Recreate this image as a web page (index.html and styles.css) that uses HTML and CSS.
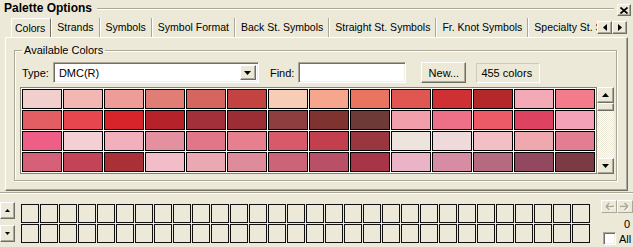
FILE: index.html
```html
<!DOCTYPE html>
<html lang="en">
<head>
  <meta charset="UTF-8" />
  <title>Palette Options</title>
  <link rel="stylesheet" href="styles.css">
</head>
<body>
  <div class="pane">
    <div class="pane-title">
      <span class="pane-caption">Palette Options</span>
      <span class="pane-rule"></span>
      <span class="close-btn raised">
        <svg width="8" height="7" viewBox="0 0 8 7"><path d="M0.5 0.5 L7.5 6.5 M7.5 0.5 L0.5 6.5" stroke="#000" stroke-width="1.7" fill="none"/></svg>
      </span>
    </div>

    <div class="tab-strip">
      <div class="tabs">
        <span class="tab active">Colors</span>
        <span class="tab">Strands</span>
        <span class="tab">Symbols</span>
        <span class="tab">Symbol Format</span>
        <span class="tab">Back St. Symbols</span>
        <span class="tab">Straight St. Symbols</span>
        <span class="tab">Fr. Knot Symbols</span>
        <span class="tab">Specialty St. Symbols</span>
      </div>
      <div class="tab-arrows">
        <span class="mini-btn raised"><svg width="4" height="7" viewBox="0 0 4 7"><polygon points="4,0 0,3.5 4,7" fill="#000"/></svg></span>
        <span class="mini-btn raised"><svg width="4" height="7" viewBox="0 0 4 7"><polygon points="0,0 4,3.5 0,7" fill="#000"/></svg></span>
      </div>
    </div>

    <div class="tab-page">
      <fieldset class="group">
        <legend>Available Colors</legend>
        <div class="filter-row">
          <span class="lbl-type">Type:</span>
          <div class="combo sunken">
            <span class="combo-text">DMC(R)</span>
            <span class="combo-btn raised"><svg width="7" height="4" viewBox="0 0 7 4"><polygon points="0,0 7,0 3.5,4" fill="#000"/></svg></span>
          </div>
          <span class="lbl-find">Find:</span>
          <div class="find-field sunken"></div>
          <span class="push-btn raised">New...</span>
          <span class="count">455 colors</span>
        </div>
        <div class="palette">
          <div class="swatches" id="swatches"></div>
          <div class="vscroll">
            <span class="sb-btn raised"><svg width="7" height="4" viewBox="0 0 7 4"><polygon points="0,4 3.5,0 7,4" fill="#000"/></svg></span>
            <span class="sb-thumb raised"></span>
            <span class="sb-track"></span>
            <span class="sb-btn raised"><svg width="7" height="4" viewBox="0 0 7 4"><polygon points="0,0 7,0 3.5,4" fill="#000"/></svg></span>
          </div>
        </div>
      </fieldset>
    </div>

    <div class="tray">
      <div class="tray-nav">
        <span class="nav-btn raised"><svg width="5" height="3" viewBox="0 0 5 3"><polygon points="0,3 2.5,0 5,3" fill="#000"/></svg></span>
        <span class="nav-btn raised"><svg width="5" height="3" viewBox="0 0 5 3"><polygon points="0,0 5,0 2.5,3" fill="#000"/></svg></span>
      </div>
      <div class="slots" id="slots"></div>
      <div class="tray-side">
        <div class="hist-arrows">
          <span class="hist-btn">
            <svg width="11" height="9" viewBox="0 0 11 9"><path d="M2 4.5 H10 M2 4.5 L5.5 1 M2 4.5 L5.5 8" stroke="#fff" stroke-width="1.4" fill="none" transform="translate(1 1)"/><path d="M2 4.5 H10 M2 4.5 L5.5 1 M2 4.5 L5.5 8" stroke="#aca899" stroke-width="1.4" fill="none"/></svg>
          </span>
          <span class="hist-btn">
            <svg width="11" height="9" viewBox="0 0 11 9"><path d="M0 4.5 H8 M8 4.5 L4.5 1 M8 4.5 L4.5 8" stroke="#fff" stroke-width="1.4" fill="none" transform="translate(1 1)"/><path d="M0 4.5 H8 M8 4.5 L4.5 1 M8 4.5 L4.5 8" stroke="#aca899" stroke-width="1.4" fill="none"/></svg>
          </span>
        </div>
        <div class="hist-count">0</div>
        <label class="check-row"><span class="check-box"></span>All</label>
      </div>
    </div>
  </div>

  <script>
    const colors = [
      '#f1cfcd', '#f2b6b3', '#ee9c97', '#e07e76', '#d4655f', '#c2433f', '#f7cdb6', '#f5a68c', '#e9745f', '#e05650', '#ce3034', '#b4282a', '#f4a9b6', '#f27c8a',
      '#e25e62', '#e8464e', '#d6242a', '#b62229', '#a2303a', '#9a2e34', '#8e3e3e', '#7f3331', '#6e3a38', '#f29fac', '#ee7088', '#ec5a68', '#dd4260', '#f4a2b8',
      '#ee5e86', '#f2d0d4', '#f2b0bc', '#e4909e', '#e07688', '#e6808e', '#d65a6a', '#c2404e', '#9a3640', '#eee4de', '#eedada', '#f2c0c4', '#eea8ae', '#e27e92',
      '#d66078', '#c24456', '#aa3038', '#f2bcc8', '#eaa8b2', '#de8c9c', '#cc6478', '#b85068', '#a83448', '#eab4c6', '#d68ca2', '#b66a80', '#92485e', '#7c3a44'
    ];

    // swatch grid
    const swatches = document.getElementById('swatches');
    colors.forEach(c => {
      const d = document.createElement('div');
      d.className = 'swatch';
      d.style.background = c;
      swatches.appendChild(d);
    });

    // empty palette slots
    const slots = document.getElementById('slots');
    for (let i = 0; i < 60; i++) {
      const d = document.createElement('div');
      d.className = 'slot';
      slots.appendChild(d);
    }
  </script>
</body>
</html>
```

FILE: styles.css
```css
body {
  margin: 0;
  background: #ece9d8;
  font-family: "Liberation Sans", Arial, sans-serif;
  font-size: 11px;
  color: #000;
}
.pane {
  width: 633px;
  height: 247px;
  overflow: hidden;
}
.raised {
  box-sizing: border-box;
  background: #ece9d8;
  border: 1px solid;
  border-color: #fff #716f64 #716f64 #fff;
  box-shadow: inset -1px -1px #aca899;
  display: flex;
  align-items: center;
  justify-content: center;
}
.sunken {
  box-sizing: border-box;
  background: #fff;
  border: 1px solid;
  border-color: #aca899 #fff #fff #aca899;
  box-shadow: inset 1px 1px #716f64, inset -1px -1px #f1efe2;
}

/* title */
.pane-title {
  display: flex;
  align-items: center;
  height: 16px;
  padding-left: 4px;
}
.pane-caption {
  font-size: 12px;
  font-weight: bold;
  line-height: 16px;
}
.pane-rule {
  flex: 1;
  border-top: 1px solid #aca899;
  border-bottom: 1px solid #fff;
  margin: 1px 3px 0 5px;
}
.close-btn {
  width: 14px;
  height: 12px;
  margin: 4px 2px 0 0;
}

/* tabs */
.tab-strip {
  display: flex;
  height: 21px;
}
.tabs {
  flex: 1;
  display: flex;
  overflow: hidden;
  margin-left: 11px;
  padding-top: 2px;
}
.tab {
  font-size: 10.5px;
  line-height: 19px;
  padding: 0 5px;
  white-space: nowrap;
  border-right: 1px solid #aca899;
  box-shadow: 1px 0 #fff;
  margin-right: 1px;
}
.tab.active {
  border-left: 1px solid #fff;
  border-top: 1px solid #fff;
  border-right-color: #716f64;
  padding: 0 5px 0 3px;
}
.tab-arrows {
  display: flex;
  margin: 5px 6px 0 0;
}
.mini-btn {
  width: 15px;
  height: 13px;
}

/* tab page */
.tab-page {
  box-sizing: border-box;
  height: 154px;
  margin: 0 5px;
  border: 1px solid;
  border-color: #fff #716f64 #716f64 #fff;
  box-shadow: inset -1px -1px #aca899;
  padding: 6px 0 0 8px;
}
.group {
  box-sizing: border-box;
  width: 603px;
  margin: 0;
  padding: 5px 2px 6px 5px;
  border: 1px solid #aca899;
  box-shadow: inset 1px 1px #fff, 1px 1px #fff;
  min-width: 0;
}
.group legend {
  padding: 0 2px;
  margin-left: 2px;
  line-height: 13px;
}
.filter-row {
  display: flex;
  align-items: center;
  height: 21px;
}
.lbl-type {
  margin-left: 2px;
}
.combo {
  display: flex;
  align-items: stretch;
  width: 206px;
  height: 21px;
  margin-left: 4px;
  padding: 2px;
}
.combo-text {
  flex: 1;
  padding-left: 3px;
  line-height: 17px;
}
.combo-btn {
  width: 16px;
}
.lbl-find {
  margin-left: 11px;
}
.find-field {
  width: 108px;
  height: 21px;
  margin-left: 4px;
}
.push-btn {
  width: 45px;
  height: 21px;
  margin-left: 15px;
}
.count {
  box-sizing: border-box;
  width: 64px;
  height: 20px;
  line-height: 18px;
  margin-left: 10px;
  padding-left: 4px;
  border: 1px solid;
  border-color: #cfcbba #fff #fff #cfcbba;
}

/* colour grid */
.palette {
  display: flex;
  margin-top: 4px;
}
.swatches {
  display: grid;
  grid-template-columns: repeat(14, 40px);
  grid-auto-rows: 20px;
  gap: 1px;
  padding: 1px;
  background: #fbfbf8;
  border: 1px solid #848170;
}
.swatch {
  box-sizing: border-box;
  border: 1px solid #000;
}
.vscroll {
  width: 17px;
  display: flex;
  flex-direction: column;
  background: repeating-conic-gradient(#fff 0 25%, #ece9d8 0 50%) 0 0 / 2px 2px;
}
.sb-btn {
  height: 16px;
}
.sb-thumb {
  height: 8px;
}
.sb-track {
  flex: 1;
}

/* bottom tray */
.tray {
  display: flex;
  align-items: flex-start;
  margin-top: 1px;
  border-top: 1px solid #aca899;
  box-shadow: inset 0 1px #fff;
  height: 60px;
}
.tray-nav {
  display: flex;
  flex-direction: column;
  gap: 6px;
  margin-top: 9px;
}
.nav-btn {
  width: 15px;
  height: 17px;
}
.slots {
  display: grid;
  grid-template-columns: repeat(30, 18px);
  grid-auto-rows: 19px;
  gap: 1px;
  margin: 11px 0 0 6px;
}
.slot {
  border: 1px solid #111;
}
.tray-side {
  width: 33px;
  margin: 7px 0 0 10px;
}
.hist-arrows {
  display: flex;
  padding-left: 1px;
}
.hist-btn {
  box-sizing: border-box;
  width: 16px;
  height: 13px;
  display: flex;
  align-items: center;
  justify-content: center;
  border: 1px solid;
  border-color: #fff #aca899 #aca899 #fff;
}
.hist-count {
  text-align: right;
  padding-right: 3px;
  line-height: 12px;
  margin-top: 5px;
}
.check-row {
  display: flex;
  align-items: center;
  margin-top: 2px;
  padding-left: 3px;
}
.check-box {
  box-sizing: border-box;
  width: 13px;
  height: 13px;
  background: #fff;
  border: 1px solid;
  border-color: #aca899 #fff #fff #aca899;
  box-shadow: inset 1px 1px #716f64, inset -1px -1px #f1efe2;
  margin-right: 3px;
}
```
